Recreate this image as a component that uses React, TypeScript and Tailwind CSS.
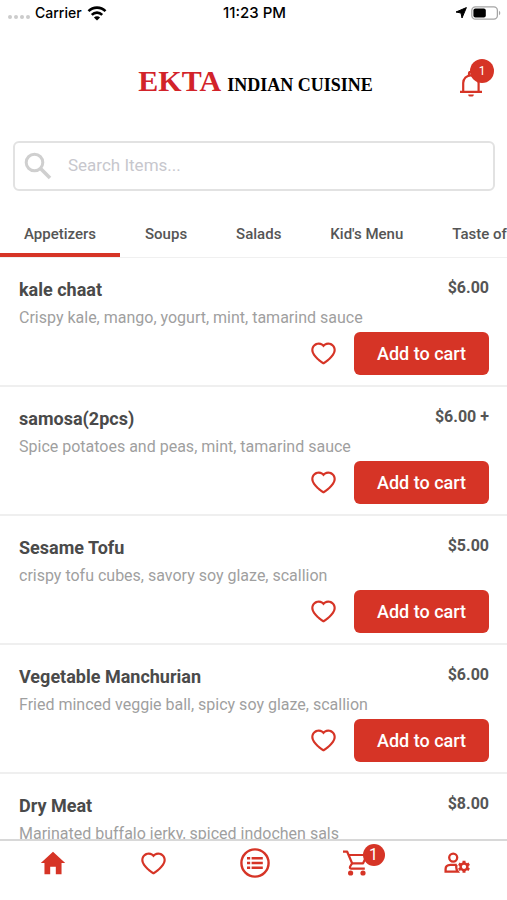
import { useState } from "react";
import { AiOutlineHeart } from "react-icons/ai";
import { IoMdHome } from "react-icons/io";

const RED = "text-[#d63426]";

type Dish = { name: string; description: string; price: string };

const categories = ["Appetizers", "Soups", "Salads", "Kid's Menu", "Taste of India"];

const dishes: Dish[] = [
  { name: "kale chaat", description: "Crispy kale, mango, yogurt, mint, tamarind sauce", price: "$6.00" },
  { name: "samosa(2pcs)", description: "Spice potatoes and peas, mint, tamarind sauce", price: "$6.00 +" },
  { name: "Sesame Tofu", description: "crispy tofu cubes, savory soy glaze, scallion", price: "$5.00" },
  { name: "Vegetable Manchurian", description: "Fried minced veggie ball, spicy soy glaze, scallion", price: "$6.00" },
  { name: "Dry Meat", description: "Marinated buffalo jerky, spiced indochen sals", price: "$8.00" },
];

function WifiIcon() {
  return (
    <svg viewBox="0 0 20 15" className="h-[15px] w-5" fill="none" stroke="black" strokeWidth="2.6" aria-hidden="true">
      <path d="M1.5 5.2a12 12 0 0 1 17 0" />
      <path d="M4.8 8.8a7.4 7.4 0 0 1 10.4 0" />
      <path d="M10 14.6 6.9 11.6a4.4 4.4 0 0 1 6.2 0Z" fill="black" stroke="none" />
    </svg>
  );
}

function BellIcon() {
  return (
    <svg viewBox="0 0 24 26" className="h-[26px] w-6" fill="none" stroke="currentColor" strokeWidth="2.2" aria-hidden="true">
      <path d="M1 20.8h22M4.2 21V12a7.7 7.7 0 0 1 15.4 0v9" />
      <path d="M10 4V2.6a2 2 0 0 1 4 0V4" />
      <path d="M9.2 23.4h5.6a2.8 2.2 0 0 1-5.6 0Z" fill="currentColor" stroke="none" />
    </svg>
  );
}

function SearchIcon() {
  return (
    <svg viewBox="0 0 28 28" className="size-7 shrink-0 text-[#cfcfcf]" fill="none" stroke="currentColor" strokeWidth="3" aria-hidden="true">
      <circle cx="10.5" cy="10.5" r="8.3" />
      <path d="m16.8 16.8 9.2 9.2" strokeWidth="3.6" />
    </svg>
  );
}

function ListCircleIcon() {
  return (
    <svg viewBox="0 0 30 30" className="size-[30px]" fill="none" stroke="currentColor" strokeWidth="2.4" aria-hidden="true">
      <circle cx="15" cy="15" r="13.6" />
      <path d="M7 10.2h3.2M7 15h3.2M7 19.8h3.2M11.6 10.2h11.2M11.6 15h11.2M11.6 19.8h11.2" />
    </svg>
  );
}

function CartIcon() {
  return (
    <svg viewBox="0 0 26 26" className="size-[26px]" fill="none" stroke="currentColor" strokeWidth="2.2" strokeLinejoin="round" aria-hidden="true">
      <path d="M0 1.7h4.2l4.9 11.6h11L24 5H5.6" />
      <path d="M9.1 13.3 7 16.8q-.6 1.8 1.4 1.8h13.4" />
      <circle cx="7.6" cy="23" r="2.6" fill="currentColor" stroke="none" />
      <circle cx="20" cy="23" r="2.6" fill="currentColor" stroke="none" />
    </svg>
  );
}

function AccountIcon() {
  return (
    <svg viewBox="0 0 26 22" className="h-[22px] w-[26px]" fill="none" stroke="currentColor" strokeWidth="2.3" aria-hidden="true">
      <circle cx="9.2" cy="5.6" r="4" />
      <path d="M12.8 12.9H6.4Q1.6 13.2 1.6 17v2.6h12.2q-1.6-2.2-1.6-4.6 0-1.1.6-2.1" />
      <circle cx="20" cy="14.8" r="3.4" strokeWidth="2.5" />
      <path
        d="M20 11.4V8.8M20 18.2v2.6M17.1 13.1l-2.3-1.3M22.9 16.5l2.3 1.3M17.1 16.5l-2.3 1.3M22.9 13.1l2.3-1.3"
        strokeWidth="3"
      />
    </svg>
  );
}

function StatusBar() {
  return (
    <div className="grid h-[26px] shrink-0 grid-cols-3 items-center pr-1.5 pl-2 font-[Inter,sans-serif] text-sm font-medium text-black">
      <div className="flex items-center gap-[5px]">
        <span className="flex gap-[2px] pt-2">
          {[0, 1, 2, 3].map((dot) => (
            <span key={dot} className="size-1 rounded-full bg-[#cccccc]" />
          ))}
        </span>
        <span>Carrier</span>
        <WifiIcon />
      </div>
      <span className="text-center text-[15px]">11:23 PM</span>
      <div className="flex items-center justify-end gap-1">
        <svg viewBox="0 0 12 12" className="size-3" stroke="black" aria-hidden="true">
          <path d="M11.4.6 7 11 6 6 1 5Z" />
        </svg>
        <svg viewBox="0 0 30 14" className="h-[14px] w-[30px]" aria-hidden="true">
          <rect x="0.8" y="0.8" width="25.6" height="12.4" rx="3.6" fill="none" stroke="#a5a5a5" strokeWidth="1.3" />
          <rect x="2.4" y="2.4" width="12.4" height="9.2" rx="2" />
          <path d="M28 4.8a2.5 2.5 0 0 1 0 4.4Z" fill="#a5a5a5" />
        </svg>
      </div>
    </div>
  );
}

function Header() {
  return (
    <header className="grid h-[115px] shrink-0 grid-cols-[48px_1fr_48px] items-center">
      <h1 className="col-start-2 flex items-baseline justify-center gap-1.5 pb-1.5 pl-1 font-['Liberation_Serif',serif] text-lg font-bold whitespace-nowrap text-black">
        <span className="text-3xl text-[#d2232a]">EKTA</span>
        <span>INDIAN CUISINE</span>
      </h1>
      <button type="button" aria-label="Notifications" className={`relative justify-self-start ${RED}`}>
        <BellIcon />
        <span className="absolute -top-3 left-[11px] flex size-6 items-center justify-center rounded-full bg-[#d63426] text-xs text-white">1</span>
      </button>
    </header>
  );
}

function DishRow({ dish }: { dish: Dish }) {
  return (
    <li className="border-b-2 border-[#efefef] pt-5 pr-[18px] pb-[10px] pl-[19px]">
      <div className="flex items-start justify-between">
        <h2 className="text-lg leading-6 font-bold text-[#4a4a4a]">{dish.name}</h2>
        <span className="text-base leading-5 font-bold text-[#555555]">{dish.price}</span>
      </div>
      <p className="pt-1 text-base leading-6 text-[#9f9f9f]">{dish.description}</p>
      <div className="mt-[2px] flex items-center justify-end gap-4">
        <button type="button" aria-label={`Save ${dish.name}`} className={RED}>
          <AiOutlineHeart className="size-[29px]" />
        </button>
        <button type="button" className="h-[43px] w-[135px] rounded-md bg-[#d63426] text-lg font-medium text-white">
          Add to cart
        </button>
      </div>
    </li>
  );
}

function BottomNav() {
  return (
    <nav className={`grid h-[61px] shrink-0 grid-cols-5 justify-items-center border-t-2 border-[#d8d8d8] bg-white pt-[7px] pl-0.5 ${RED}`}>
      <button type="button" aria-label="Home" className="flex h-[30px] items-center">
        <IoMdHome className="size-[30px]" />
      </button>
      <button type="button" aria-label="Favorites" className="flex h-[30px] items-center">
        <AiOutlineHeart className="size-[29px]" />
      </button>
      <button type="button" aria-label="Orders" className="flex h-[30px] items-center">
        <ListCircleIcon />
      </button>
      <button type="button" aria-label="Cart" className="relative flex h-[30px] items-center">
        <CartIcon />
        <span className="absolute -top-1 left-5 flex size-[22px] items-center justify-center rounded-full bg-[#d63426] text-base text-white">1</span>
      </button>
      <button type="button" aria-label="Account" className="flex h-[30px] items-center">
        <AccountIcon />
      </button>
    </nav>
  );
}

export default function App() {
  const [active, setActive] = useState("Appetizers");
  return (
    <div className="flex h-screen flex-col overflow-hidden bg-white font-[Roboto,sans-serif]">
      <StatusBar />
      <Header />
      <label className="mr-3 ml-[13px] flex h-[50px] shrink-0 items-center gap-4 rounded-md border-2 border-[#e2e2e2] pl-[9px]">
        <SearchIcon />
        <input
          type="search"
          aria-label="Search items"
          placeholder="Search Items..."
          className="w-full min-w-0 text-[17px] outline-none placeholder:text-[#c7c7cd]"
        />
      </label>
      <div role="tablist" className="mt-5 flex h-[47px] shrink-0 gap-px overflow-x-auto border-b border-[#f0f0f0] [scrollbar-width:none]">
        {categories.map((category) => (
          <button
            key={category}
            type="button"
            role="tab"
            aria-selected={category === active}
            onClick={() => setActive(category)}
            className={`shrink-0 border-b-4 px-6 pt-1 text-[15px] font-medium text-[#555555] ${
              category === active ? "border-[#d63426]" : "border-transparent"
            }`}
          >
            {category}
          </button>
        ))}
      </div>
      <ul className="min-h-0 flex-1 overflow-y-auto [scrollbar-width:none]">
        {dishes.map((dish) => (
          <DishRow key={dish.name} dish={dish} />
        ))}
      </ul>
      <BottomNav />
    </div>
  );
}
